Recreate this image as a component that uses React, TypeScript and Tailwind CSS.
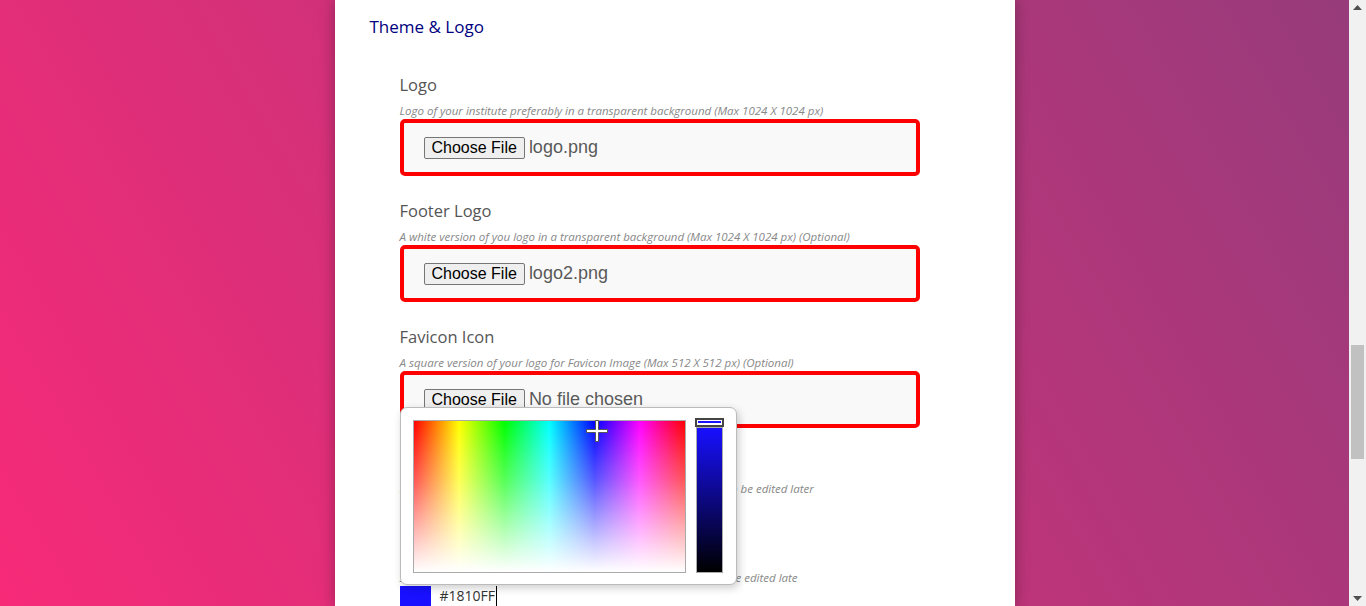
import React from 'react';

// Theme & Logo settings section, with the colour picker popup open

type FieldProps = {
  label: string;
  hint: string;
  children: React.ReactNode;
};

function Field({ label, hint, children }: FieldProps) {
  return (
    <div className="mb-[23px]">
      <div className="text-[16.5px] leading-[24px] text-[#555]">{label}</div>
      <div className="mt-[6px] text-[11.5px] italic leading-[16px] text-[#888]">{hint}</div>
      <div>{children}</div>
    </div>
  );
}

function FileBox({ fileName }: { fileName: string }) {
  return (
    <div className="flex h-[57px] items-center rounded-[5px] border-4 border-[#ff0000] bg-[#f9f9f9] pl-[20px]">
      <span className="rounded-[2px] border border-[#767676] bg-[#efefef] px-[7px] font-['Liberation_Sans',Arial,sans-serif] text-[16px] leading-[20px] text-black">
        Choose File
      </span>
      <span className="ml-[4px] font-['Liberation_Sans',Arial,sans-serif] text-[18px] text-[#5a5a5a]">{fileName}</span>
    </div>
  );
}

function ColorRow({ value, caret }: { value: string; caret?: boolean }) {
  return (
    <div className="flex h-[20px] items-center">
      <div className="h-[21px] w-[31px] self-start" style={{ backgroundColor: value }} />
      <div className="ml-[9px] flex items-center text-[14px] leading-[20px] text-[#333]">
        {value}
        {caret && <span className="ml-px h-[20px] w-px bg-black" />}
      </div>
    </div>
  );
}

function ColorPicker() {
  return (
    <div className="absolute left-[65px] top-[407px] flex h-[178px] w-[337px] rounded-[7px] border border-[#bbb] bg-white pl-[12px] pt-[12px] shadow-[2px_3px_8px_rgba(0,0,0,0.2)]">
      {/* saturation / hue area */}
      <div className="relative h-[153px] w-[273px] border border-[#aaa] bg-[linear-gradient(to_right,#ff0000,#ffff00,#00ff00,#00ffff,#0000ff,#ff00ff,#ff0000)]">
        <div className="h-full w-full bg-[linear-gradient(to_bottom,rgba(255,255,255,0),rgba(255,255,255,0.35)_40%,#ffffff)]" />
        <svg className="absolute left-[171px] top-[-2px]" width="24" height="24" viewBox="0 0 24 24">
          <path d="M10.5 1.5h3v9h9v3h-9v9h-3v-9h-9v-3h9z" fill="#fff" stroke="#555" strokeWidth="1" />
        </svg>
      </div>
      {/* value slider */}
      <div className="relative ml-[10px] mt-[7px] h-[146px] w-[27px] border border-[#aaa] bg-[linear-gradient(to_bottom,#1810ff,#000000)]">
        <div className="absolute left-[-2px] top-[-10px] h-[9px] w-[29px] border-[2px] border-[#444] bg-white p-px">
          <div className="h-[2px] w-full bg-[#1810ff]" />
        </div>
      </div>
    </div>
  );
}

function Scrollbar() {
  return (
    <div className="flex h-full w-[17px] shrink-0 flex-col items-center bg-[#f1f1f1]">
      <svg className="mt-[5px] shrink-0" width="9" height="5" viewBox="0 0 9 5">
        <path d="M4.5 0L9 5H0z" fill="#505050" />
      </svg>
      <div className="mt-[335px] h-[114px] w-[13px] shrink-0 bg-[#c1c1c1]" />
      <svg className="mb-[5px] mt-auto shrink-0" width="9" height="5" viewBox="0 0 9 5">
        <path d="M0 0h9L4.5 5z" fill="#505050" />
      </svg>
    </div>
  );
}

export default function App() {
  return (
    <div className="flex h-[606px] w-full overflow-hidden font-['Open_Sans',sans-serif]">
      <div className="flex-1 bg-[linear-gradient(60deg,#f72a78,#973b7b)]">
        <div className="relative mx-auto h-full w-[680px] bg-white pl-[35px] pt-[15px] shadow-[0_0_14px_rgba(0,0,0,0.3)]">
          <h2 className="text-[17px] leading-[24px] text-[#000080]">Theme &amp; Logo</h2>

          <div className="ml-[30px] mt-[34px] w-[520px]">
            <Field label="Logo" hint="Logo of your institute preferably in a transparent background (Max 1024 X 1024 px)">
              <FileBox fileName="logo.png" />
            </Field>
            <Field label="Footer Logo" hint="A white version of you logo in a transparent background (Max 1024 X 1024 px) (Optional)">
              <FileBox fileName="logo2.png" />
            </Field>
            <Field label="Favicon Icon" hint="A square version of your logo for Favicon Image (Max 512 X 512 px) (Optional)">
              <FileBox fileName="No file chosen" />
            </Field>
            <Field label="Primary Color" hint="Primary colour of your website used for buttons and links. This can be edited later">
              <ColorRow value="#2B2A8C" />
            </Field>
            <Field label="Secondary Color" hint="Secondary color of your website used for the site footer. This can be edited late">
              <ColorRow value="#1810FF" caret />
            </Field>
          </div>

          <ColorPicker />
        </div>
      </div>
      <Scrollbar />
    </div>
  );
}
